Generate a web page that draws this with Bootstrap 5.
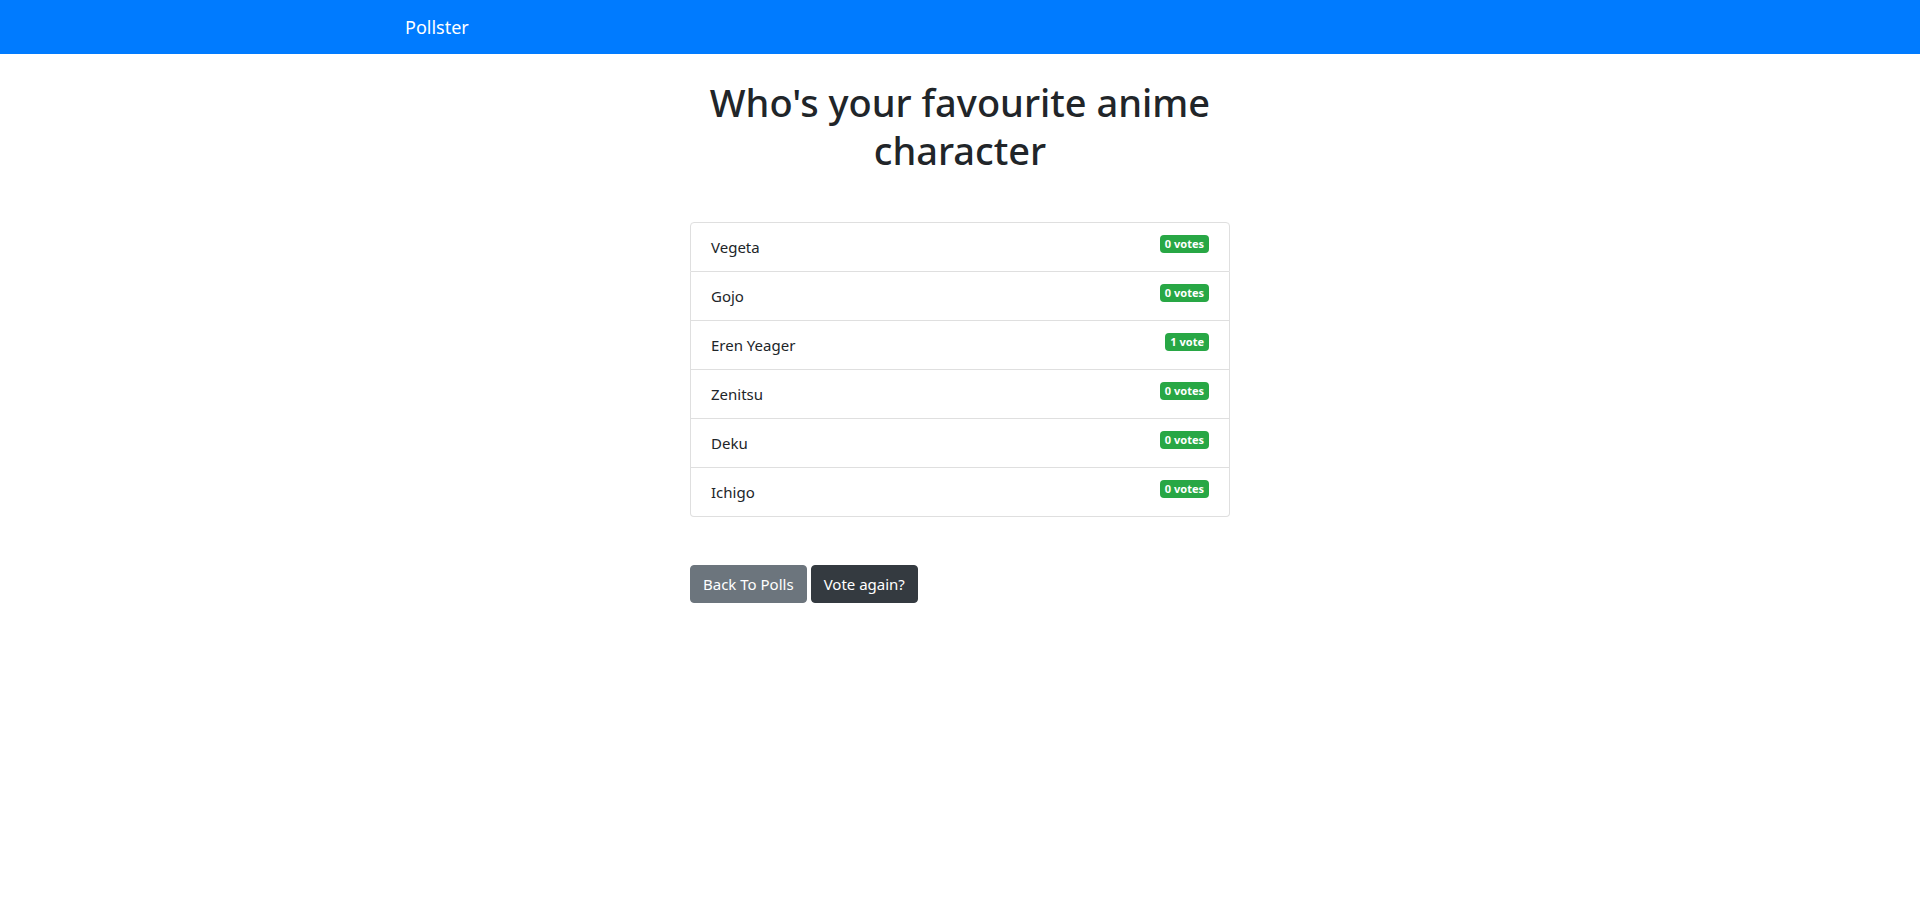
<!DOCTYPE html>
<html lang="en">
<head>
<meta charset="utf-8">
<meta name="viewport" content="width=device-width, initial-scale=1">
<title>Pollster</title>
<link href="https://cdn.jsdelivr.net/npm/bootstrap@5.3.0/dist/css/bootstrap.min.css" rel="stylesheet">
<style>
  body { font-family: "Segoe UI", "Noto Sans", sans-serif; font-size: 15px; line-height: 24px; color: #212529; }
  .page-width { max-width: 1140px; padding-left: 15px; padding-right: 15px; }
  .topbar { background: #007bff; --bs-navbar-padding-y: 8px; }
  .topbar .navbar-brand { font-size: 18px; line-height: 28px; padding: 5px 0; }
  .poll-column { max-width: 570px; padding: 0 15px; }
  .poll-title { font-size: 38px; line-height: 48px; font-weight: 500; }
  .poll-results { --bs-list-group-border-color: #dfdfdf; --bs-list-group-border-radius: 4px; --bs-list-group-color: #212529; --bs-list-group-item-padding-x: 20px; --bs-list-group-item-padding-y: 12px; }
  .vote-badge { background: #28a745; font-size: 11px; line-height: 12px; padding: 3px 5px; border-radius: 4px; }
  .poll-actions { gap: 4px; }
  .poll-actions .btn { --bs-btn-font-size: 15px; --bs-btn-line-height: 24px; --bs-btn-border-radius: 4px; }
  .btn-again { --bs-btn-color: #fff; --bs-btn-bg: #343a40; --bs-btn-border-color: #343a40; --bs-btn-hover-color: #fff; --bs-btn-hover-bg: #23272b; }
</style>
</head>
<body>
<nav class="navbar topbar p-0 py-2" data-bs-theme="dark">
  <div class="container page-width">
    <a class="navbar-brand text-white" href="#">Pollster</a>
  </div>
</nav>
<main class="poll-column mx-auto mt-4">
  <h1 class="poll-title text-center mb-5">Who's your favourite anime character</h1>
  <ul class="list-group poll-results mb-5">
    <li class="list-group-item d-flex justify-content-between align-items-start">Vegeta <span class="badge vote-badge">0 votes</span></li>
    <li class="list-group-item d-flex justify-content-between align-items-start">Gojo <span class="badge vote-badge">0 votes</span></li>
    <li class="list-group-item d-flex justify-content-between align-items-start">Eren Yeager <span class="badge vote-badge">1 vote</span></li>
    <li class="list-group-item d-flex justify-content-between align-items-start">Zenitsu <span class="badge vote-badge">0 votes</span></li>
    <li class="list-group-item d-flex justify-content-between align-items-start">Deku <span class="badge vote-badge">0 votes</span></li>
    <li class="list-group-item d-flex justify-content-between align-items-start">Ichigo <span class="badge vote-badge">0 votes</span></li>
  </ul>
  <div class="d-flex poll-actions">
    <a class="btn btn-secondary" href="#">Back To Polls</a>
    <a class="btn btn-again" href="#">Vote again?</a>
  </div>
</main>
<script src="https://cdn.jsdelivr.net/npm/bootstrap@5.3.0/dist/js/bootstrap.bundle.min.js"></script>
</body>
</html>
